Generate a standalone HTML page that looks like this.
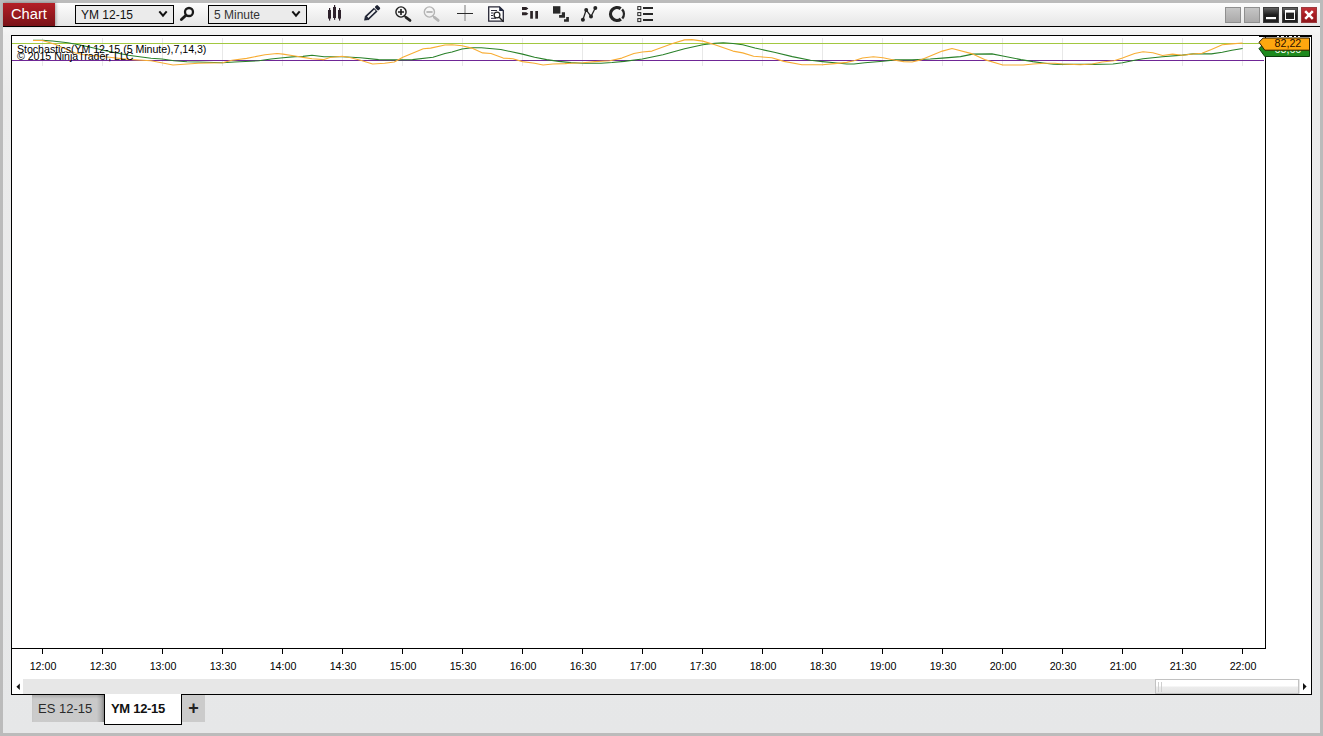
<!DOCTYPE html>
<html>
<head>
<meta charset="utf-8">
<title>Chart</title>
<style>
*{box-sizing:border-box;margin:0;padding:0}
html,body{width:1323px;height:736px;overflow:hidden;background:#bbbbbb;font-family:"Liberation Sans",sans-serif;}
#win{position:absolute;left:0;top:0;width:1323px;height:736px;background:#bbbbbb;overflow:hidden}
#panel{position:absolute;left:3px;top:27px;width:1317px;height:706px;background:linear-gradient(#f6f6f6,#f1f1f1 9px,#ebebeb 70px,#e6e7e8);}
#toolbar{position:absolute;left:3px;top:3px;width:1317px;height:23px;background:linear-gradient(#fdfdfd,#e6e6e6);}
#tbline{position:absolute;left:3px;top:26px;width:1317px;height:1px;background:#000;}
#charttab{position:absolute;left:3px;top:3px;width:52px;height:23px;background:linear-gradient(#b41f26,#7a1218);color:#fff;font-size:14.7px;line-height:23px;padding-left:8px;box-shadow:1px 0 3px rgba(0,0,0,.35);}
.sel{position:absolute;top:5px;height:19px;border:1px solid #000;background:#ebebeb;font-size:12px;line-height:18px;padding-left:5px;color:#111;}
.abs{position:absolute}
#chart{position:absolute;left:11px;top:35px;width:1301px;height:660px;background:#fff;border:1px solid #000;}
#plot{position:absolute;left:11px;top:35px;width:1255px;height:614px;border:1px solid #000;background:#fff;}
.tl{position:absolute;top:660px;width:60px;text-align:center;font-size:10.67px;color:#000;line-height:12px;}
.tk{position:absolute;top:649px;width:1px;height:5px;background:#000;}
.gl{position:absolute;top:38px;width:1px;height:28px;background:#e8e8e8;}
#scroll{position:absolute;left:12px;top:679px;width:1299px;height:15px;background:#e7e7e7;}
#sl,#sr{position:absolute;top:679px;height:15px;width:11px;background:#fff}
#sl{left:12px}#sr{left:1300px}
#thumb{position:absolute;left:1155px;top:679px;width:144px;height:15px;border:1px solid #c2c2c2;background:linear-gradient(#fff 0,#fff 45%,#ececec 55%,#e4e4e4 100%);}
.tab{position:absolute;top:695px;height:27px;font-size:13px;line-height:27px;text-align:center;color:#222;}
.ctxt{position:absolute;left:17px;font-size:10.67px;line-height:12px;color:#000;white-space:nowrap;letter-spacing:-0.05px}

</style>
</head>
<body>
<div id="win">
<div id="toolbar"></div>
<div id="tbline"></div>
<div id="panel"></div>
<div id="charttab">Chart</div>
<div class="sel" style="left:75px;width:99px;">YM 12-15</div>
<div class="sel" style="left:208px;width:99px;color:#333">5 Minute</div>
<svg class="abs" style="left:0;top:0" width="1323" height="34" viewBox="0 0 1323 34">
<!-- chevrons -->
<path d="M159.3 11.3 L163 15.6 L166.7 11.3" fill="none" stroke="#111" stroke-width="2"/>
<path d="M292.3 11.3 L296 15.6 L299.7 11.3" fill="none" stroke="#111" stroke-width="2"/>
<!-- search -->
<circle cx="189" cy="12" r="4" fill="none" stroke="#1a1a1a" stroke-width="2.3"/>
<path d="M186 15.2 L181.4 19.5" stroke="#1a1a1a" stroke-width="2.9" stroke-linecap="round"/>
<!-- candles -->
<g fill="#2e222c">
<rect x="328" y="10" width="3" height="8.6"/><rect x="329" y="8" width="1.2" height="12.6"/>
<rect x="333" y="7" width="3" height="11"/><rect x="334" y="5" width="1.2" height="14.8"/>
<rect x="338" y="10" width="3" height="8.6"/><rect x="339" y="8" width="1.2" height="12.6"/>
</g>
<!-- pencil -->
<g transform="translate(364.1,20.6) rotate(-43.5)">
<path d="M0 0 L3.6 -2.6 L3.6 2.6 Z" fill="#1f2433"/>
<rect x="3.4" y="-2.6" width="12.6" height="5.2" fill="#1f2433"/>
<rect x="5" y="-1" width="10" height="2" fill="#f4f4f4"/>
<rect x="16.8" y="-2.6" width="3.6" height="5.2" rx="1.2" fill="#1f2433"/>
</g>
<!-- zoom in -->
<circle cx="401" cy="12" r="5.1" fill="none" stroke="#1c1c1c" stroke-width="1.4"/>
<path d="M398 12 H404 M401 9 V15" stroke="#1c1c1c" stroke-width="1.6"/>
<path d="M404.4 15.8 L406 17.2" stroke="#262626" stroke-width="1.4"/><path d="M406 17.4 L410 20.4" stroke="#262626" stroke-width="2.8" stroke-linecap="round"/>
<!-- zoom out -->
<circle cx="429.4" cy="12" r="5.1" fill="none" stroke="#b4b4b4" stroke-width="1.4"/>
<path d="M426.4 12 H432.6" stroke="#b4b4b4" stroke-width="1.8"/>
<path d="M432.8 15.8 L434.4 17.2" stroke="#b4b4b4" stroke-width="1.4"/><path d="M434.4 17.4 L438.2 20.4" stroke="#b4b4b4" stroke-width="2.8" stroke-linecap="round"/>
<!-- crosshair -->
<rect x="464" y="5" width="2" height="16" fill="#b8b8b8"/>
<rect x="457" y="13" width="16" height="1" fill="#2a2a2a"/>
<!-- doc search -->
<path d="M488.7 6.8 H499.5 L503.3 10.6 V21.2 H488.7 Z" fill="#fbfbfb" stroke="#262636" stroke-width="1.3"/>
<path d="M499.2 6.4 L503.7 10.9 H499.2 Z" fill="#1f2740"/>
<path d="M491 10.5 H497 M491 13 H493.5 M491 15.5 H493 M491 18.3 H496" stroke="#2a2a3a" stroke-width="1"/>
<circle cx="497" cy="15" r="2.9" fill="#fff" stroke="#222" stroke-width="1.3"/>
<path d="M499.2 17.3 L503.6 21.7" stroke="#222" stroke-width="1.4"/>
<!-- arrows bars -->
<g fill="#2b2326">
<path d="M522 7 H526.2 L528.4 8.5 L526.2 10 H522 Z"/>
<path d="M522 12.2 H526.2 L528.4 13.7 L526.2 15.2 H522 Z"/>
<rect x="530.2" y="11" width="2.7" height="7.7"/>
<rect x="535.3" y="11" width="2.7" height="7.7"/>
</g>
<!-- cascade -->
<g fill="#2a2a2a">
<rect x="553" y="6.2" width="7.4" height="7.4"/>
<path d="M561.8 12.3 H565 V17.8 H559.1 V15 H561.8 Z"/>
<path d="M566.2 17.1 H568.9 V21.7 H564 V19.2 H566.2 Z"/>
</g>
<!-- polyline -->
<path d="M582.9 19.8 L586.2 9.9 L591 16.5 L595.3 8" fill="none" stroke="#242424" stroke-width="1.3"/>
<g fill="#242424"><circle cx="582.9" cy="19.8" r="2"/><circle cx="586.2" cy="9.9" r="2"/><circle cx="591" cy="16.5" r="2"/><circle cx="595.3" cy="8" r="2"/></g>
<!-- ring -->
<path d="M620.7 8.7 A6.45 6.45 0 1 0 620.9 19.15" fill="none" stroke="#262626" stroke-width="3.3"/>
<path d="M622.1 9.4 A6.9 6.9 0 0 1 622.3 18.4" fill="none" stroke="#262626" stroke-width="2.4"/>
<!-- list -->
<g fill="none" stroke="#262626" stroke-width="1">
<rect x="637.8" y="6.6" width="3" height="3"/><rect x="637.8" y="12.6" width="3" height="3"/><rect x="637.8" y="18.6" width="3" height="3"/>
</g>
<g fill="#262626"><rect x="643" y="7" width="10" height="2"/><rect x="643" y="13" width="10" height="2"/><rect x="643" y="19" width="10" height="2"/></g>
<!-- window buttons -->
<defs>
<linearGradient id="gg" x1="0" y1="0" x2="0" y2="1"><stop offset="0" stop-color="#c6c6c6"/><stop offset="1" stop-color="#aaa9a9"/></linearGradient>
<linearGradient id="gb" x1="0" y1="0" x2="0" y2="1"><stop offset="0" stop-color="#666"/><stop offset="0.5" stop-color="#1d1d1d"/><stop offset="1" stop-color="#222"/></linearGradient>
<linearGradient id="gr" x1="0" y1="0" x2="0" y2="1"><stop offset="0" stop-color="#c4343a"/><stop offset="0.5" stop-color="#a81c22"/><stop offset="1" stop-color="#8e181d"/></linearGradient>
</defs>
<rect x="1225.5" y="7.5" width="15" height="15" fill="url(#gg)" stroke="#8f8f8f"/>
<rect x="1244.5" y="7.5" width="15" height="15" fill="url(#gg)" stroke="#8f8f8f"/>
<rect x="1263.5" y="7.5" width="15" height="15" fill="url(#gb)" stroke="#3c3c3c"/>
<rect x="1266" y="17" width="10" height="2.2" fill="#fff"/>
<rect x="1282.5" y="7.5" width="15" height="15" fill="url(#gb)" stroke="#3c3c3c"/>
<rect x="1285.5" y="10.5" width="9" height="9" fill="#222" stroke="#fff" stroke-width="1"/>
<rect x="1285" y="10" width="10" height="2.6" fill="#fff"/>
<rect x="1301.5" y="7.5" width="15" height="15" fill="url(#gr)" stroke="#9c3a3e"/>
<path d="M1305.2 11.2 L1312.8 18.8 M1312.8 11.2 L1305.2 18.8" stroke="#fff" stroke-width="2.5"/>
</svg>

<div id="chart"></div>
<div id="plot"></div>
<div class="gl" style="left:42px"></div><div class="gl" style="left:102px"></div><div class="gl" style="left:162px"></div><div class="gl" style="left:222px"></div><div class="gl" style="left:282px"></div><div class="gl" style="left:342px"></div><div class="gl" style="left:402px"></div><div class="gl" style="left:462px"></div><div class="gl" style="left:522px"></div><div class="gl" style="left:582px"></div><div class="gl" style="left:642px"></div><div class="gl" style="left:702px"></div><div class="gl" style="left:762px"></div><div class="gl" style="left:822px"></div><div class="gl" style="left:882px"></div><div class="gl" style="left:942px"></div><div class="gl" style="left:1002px"></div><div class="gl" style="left:1062px"></div><div class="gl" style="left:1122px"></div><div class="gl" style="left:1182px"></div><div class="gl" style="left:1242px"></div>
<svg class="abs" style="left:0;top:34px" width="1323" height="36" viewBox="0 34 1323 36">
<rect x="12" y="43" width="1248" height="1" fill="#a2c840"/>
<rect x="12" y="60" width="1252" height="1" fill="#6f2796"/>
<polyline points="33.0,40.3 42.5,40.4 52.5,41.0 67.8,42.7 80.0,45.0 90.5,47.3 105.6,50.7 128.3,55.3 151.0,58.2 162.0,59.0 174.0,60.8 187.0,61.8 198.0,62.0 222.5,62.8 234.6,62.0 258.8,60.8 271.0,59.0 283.0,57.8 295.0,56.6 303.0,56.4 312.0,55.3 324.0,56.8 342.3,56.8 360.5,57.8 378.6,59.6 396.7,59.9 412.5,59.6 433.0,57.2 445.0,53.5 452.0,52.0 462.0,49.0 471.8,47.7 481.4,47.7 500.8,49.5 522.5,54.1 534.6,57.2 546.7,59.6 558.8,61.4 571.0,62.6 583.0,63.2 601.0,63.2 612.0,62.5 624.2,61.4 642.3,59.0 662.9,54.7 684.6,48.7 702.8,44.7 714.9,43.3 723.3,42.7 733.0,43.5 742.7,44.7 755.0,48.0 774.2,52.3 792.3,56.6 810.5,60.2 822.5,61.6 834.6,62.8 846.7,64.0 854.0,64.0 864.9,62.8 883.0,61.2 895.0,59.9 912.0,59.9 930.2,59.0 942.3,58.1 960.5,56.6 972.6,54.1 991.9,53.9 1002.8,56.0 1020.9,59.6 1033.0,61.6 1045.0,63.2 1053.6,64.2 1062.0,64.4 1092.3,64.4 1112.9,64.0 1122.5,62.8 1134.6,60.2 1143.1,58.7 1162.5,56.8 1182.3,55.1 1193.2,53.9 1211.4,53.9 1222.3,52.3 1231.9,50.3 1242.6,48.5" fill="none" stroke="#2a812a" stroke-width="1.1" stroke-linejoin="round"/>
<polyline points="33.0,40.5 42.5,40.5 55.0,44.3 69.3,50.7 75.4,53.0 82.9,54.5 109.4,57.2 128.3,59.4 151.0,60.8 173.0,65.0 198.4,63.2 222.5,62.8 232.0,60.2 246.7,58.4 265.0,54.7 277.0,53.5 283.0,54.1 295.0,56.0 303.0,57.4 312.0,58.7 324.0,59.6 330.0,57.5 342.3,56.3 350.8,57.8 360.5,60.2 372.6,64.0 384.6,63.2 394.3,62.0 402.8,57.2 423.3,48.7 430.6,48.1 445.0,45.0 452.0,44.7 462.0,45.7 471.8,48.1 482.6,52.9 491.0,53.5 503.2,58.1 512.9,58.7 522.5,61.6 534.6,63.2 543.1,65.0 552.8,64.0 564.9,63.6 571.0,63.2 583.0,62.8 595.0,61.6 609.7,60.8 621.8,58.1 633.9,53.5 642.3,52.0 652.0,51.1 672.6,43.5 684.6,39.9 691.9,39.6 702.8,41.1 714.9,44.7 733.0,51.1 742.7,52.9 753.6,56.3 760.0,56.8 771.8,57.8 783.9,61.4 802.0,64.8 822.5,64.8 834.6,63.6 846.7,62.4 854.0,60.8 862.5,58.0 873.3,56.8 883.0,57.8 895.0,60.2 903.6,61.6 912.0,62.0 921.8,59.6 942.3,51.1 952.0,48.5 972.6,53.9 984.6,59.6 1002.8,65.0 1023.3,65.0 1033.0,64.0 1045.0,63.2 1055.0,63.2 1062.0,64.0 1080.2,64.8 1092.3,64.0 1102.0,62.0 1114.0,60.8 1122.5,58.0 1134.6,53.5 1143.1,51.7 1152.8,52.7 1162.5,55.5 1172.5,54.1 1182.3,55.2 1192.7,54.0 1202.0,53.2 1211.4,49.5 1222.3,44.7 1231.9,43.9 1242.6,43.0" fill="none" stroke="#f8ad35" stroke-width="1.1" stroke-linejoin="round"/>
<rect x="1259" y="35" width="52" height="2" fill="#000"/>
<path d="M1277 36.5h2M1281 36.5h3M1286 36.5h1M1289 36.5h3M1294 36.5h2M1298 36.5h2" stroke="#fff" stroke-width="1"/>
<path d="M1259 48.6 L1263.2 44.4 H1309.5 V56.5 H1264.8 Z" fill="#1e8a1e" stroke="#0b3d0b" stroke-width="1"/>
<svg x="1264" y="50.6" width="46" height="6" viewBox="1264 50.6 46 6"><text x="1274.6" y="52.9" font-family="Liberation Sans, sans-serif" font-size="10.67" fill="#fff">68,66</text></svg>
<path d="M1259 42.2 L1263.2 38 H1309.5 V50.2 H1264.8 Z" fill="#ffa70f" stroke="#2a1a00" stroke-width="1"/>
<text x="1274.6" y="46.7" font-family="Liberation Sans, sans-serif" font-size="10.67" fill="#2a0d00">82,22</text>
</svg>

<div class="ctxt" style="top:43px">Stochastics(YM 12-15 (5 Minute),7,14,3)</div>
<div class="ctxt" style="top:50px">© 2015 NinjaTrader, LLC</div>
<div id="scroll"></div><div id="sl"></div><div id="sr"></div><div id="thumb"></div>
<svg class="abs" style="left:0;top:676px" width="1323" height="22" viewBox="0 676 1323 22">
<path d="M19.8 683.6 V690 L16.4 686.8 Z" fill="#111"/>
<path d="M1303 683 V690.2 L1306.6 686.6 Z" fill="#111"/>
<path d="M1158.5 682 V692 M1161.5 682 V692" stroke="#cfcfcf" stroke-width="1"/>
</svg>
<div class="tk" style="left:42px"></div><div class="tl" style="left:13px">12:00</div>
<div class="tk" style="left:102px"></div><div class="tl" style="left:73px">12:30</div>
<div class="tk" style="left:162px"></div><div class="tl" style="left:133px">13:00</div>
<div class="tk" style="left:222px"></div><div class="tl" style="left:193px">13:30</div>
<div class="tk" style="left:282px"></div><div class="tl" style="left:253px">14:00</div>
<div class="tk" style="left:342px"></div><div class="tl" style="left:313px">14:30</div>
<div class="tk" style="left:402px"></div><div class="tl" style="left:373px">15:00</div>
<div class="tk" style="left:462px"></div><div class="tl" style="left:433px">15:30</div>
<div class="tk" style="left:522px"></div><div class="tl" style="left:493px">16:00</div>
<div class="tk" style="left:582px"></div><div class="tl" style="left:553px">16:30</div>
<div class="tk" style="left:642px"></div><div class="tl" style="left:613px">17:00</div>
<div class="tk" style="left:702px"></div><div class="tl" style="left:673px">17:30</div>
<div class="tk" style="left:762px"></div><div class="tl" style="left:733px">18:00</div>
<div class="tk" style="left:822px"></div><div class="tl" style="left:793px">18:30</div>
<div class="tk" style="left:882px"></div><div class="tl" style="left:853px">19:00</div>
<div class="tk" style="left:942px"></div><div class="tl" style="left:913px">19:30</div>
<div class="tk" style="left:1002px"></div><div class="tl" style="left:973px">20:00</div>
<div class="tk" style="left:1062px"></div><div class="tl" style="left:1033px">20:30</div>
<div class="tk" style="left:1122px"></div><div class="tl" style="left:1093px">21:00</div>
<div class="tk" style="left:1182px"></div><div class="tl" style="left:1153px">21:30</div>
<div class="tk" style="left:1242px"></div><div class="tl" style="left:1213px">22:00</div>

<div class="tab" style="left:32px;width:72px;background:linear-gradient(90deg,#cbcbcb 0,#c9c9c9 90%,#b0b0b0 96%,#8c8c8c 100%);color:#2a2a2a;text-align:left;padding-left:6px;box-shadow:inset 0 3px 3px -1px rgba(0,0,0,.15)">ES 12-15</div>
<div class="tab" style="left:104px;width:78px;height:31px;top:694px;line-height:29px;background:#fff;border:1px solid #000;border-top:none;font-weight:bold;color:#111;text-align:left;padding-left:6px;letter-spacing:-0.3px">YM 12-15</div>
<div class="tab" style="left:182px;width:23px;background:#cbcbcb;font-weight:bold;font-size:18px;line-height:27px">+</div>

</div>
</body>
</html>
